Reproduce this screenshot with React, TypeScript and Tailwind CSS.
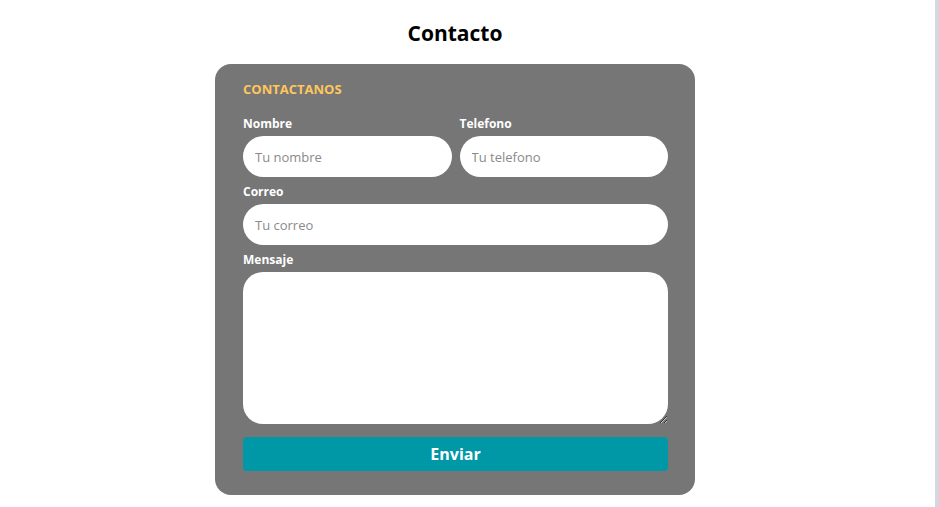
export default function App() {
  return (
    <div className="flex min-h-[507px] w-full bg-white font-['Open_Sans',sans-serif]">
      <main className="flex flex-1 flex-col items-center pt-[19px] pr-[25px]">
        <h1 className="text-[21px] leading-[28px] font-bold text-black">Contacto</h1>

        <form className="mt-[17px] flex w-[480px] flex-col rounded-[16px] bg-[#767676] pt-[16px] pr-[27px] pb-[24px] pl-[28px]">
          <h2 className="text-[13px] leading-[18px] font-bold text-[#ffc65c]">CONTACTANOS</h2>

          <div className="mt-[18px] grid grid-cols-2 gap-x-[8px]">
            <Field label="Nombre" placeholder="Tu nombre" />
            <Field label="Telefono" placeholder="Tu telefono" />
          </div>

          <div className="mt-[7px]">
            <Field label="Correo" placeholder="Tu correo" />
          </div>

          <div className="mt-[7px] flex flex-col">
            <label className="text-[12px] leading-[16px] font-bold text-white">Mensaje</label>
            <textarea className="mt-[4px] h-[152px] w-full resize-y rounded-[20px] bg-white px-[12px] py-[10px] text-[13px] outline-none" />
          </div>

          <button
            type="button"
            className="mt-[13px] h-[34px] w-full rounded-[4px] bg-[#0097a7] text-[16px] font-bold text-white"
          >
            Enviar
          </button>
        </form>
      </main>
      <aside className="w-[4px] bg-[#d3d8e0]" />
    </div>
  )
}

function Field({ label, placeholder }: { label: string; placeholder: string }) {
  return (
    <div className="flex flex-col">
      <label className="text-[12px] leading-[16px] font-bold text-white">{label}</label>
      <input
        placeholder={placeholder}
        className="mt-[4px] h-[41px] w-full rounded-full bg-white px-[12px] text-[13px] text-gray-700 outline-none placeholder:text-[#8a8a8a]"
      />
    </div>
  )
}
